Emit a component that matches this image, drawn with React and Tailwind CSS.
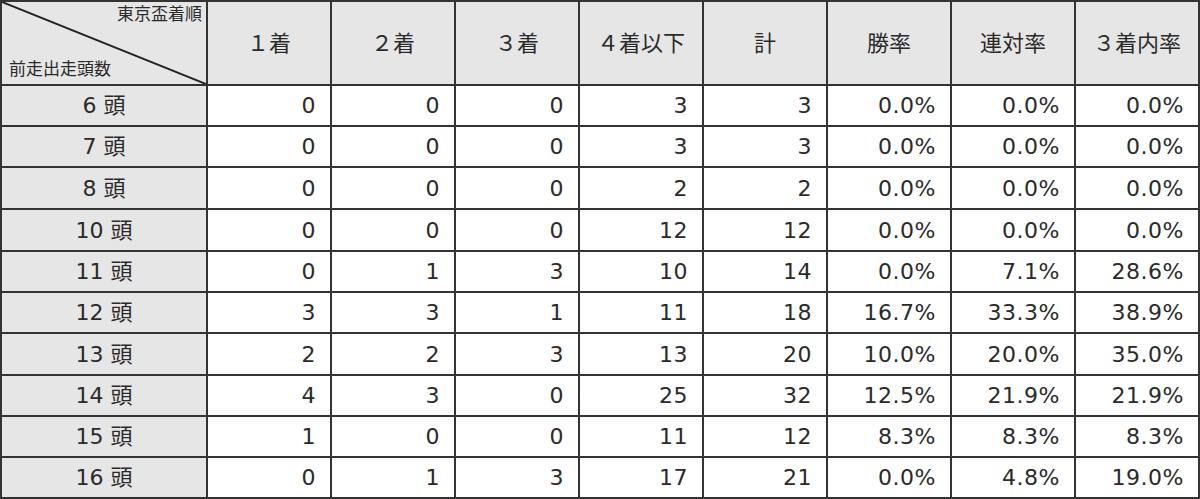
import React from "react";

const cols = ["１着", "２着", "３着", "４着以下", "計", "勝率", "連対率", "３着内率"];
const rows = [
  ["6 頭", 0, 0, 0, 3, 3, "0.0%", "0.0%", "0.0%"],
  ["7 頭", 0, 0, 0, 3, 3, "0.0%", "0.0%", "0.0%"],
  ["8 頭", 0, 0, 0, 2, 2, "0.0%", "0.0%", "0.0%"],
  ["10 頭", 0, 0, 0, 12, 12, "0.0%", "0.0%", "0.0%"],
  ["11 頭", 0, 1, 3, 10, 14, "0.0%", "7.1%", "28.6%"],
  ["12 頭", 3, 3, 1, 11, 18, "16.7%", "33.3%", "38.9%"],
  ["13 頭", 2, 2, 3, 13, 20, "10.0%", "20.0%", "35.0%"],
  ["14 頭", 4, 3, 0, 25, 32, "12.5%", "21.9%", "21.9%"],
  ["15 頭", 1, 0, 0, 11, 12, "8.3%", "8.3%", "8.3%"],
  ["16 頭", 0, 1, 3, 17, 21, "0.0%", "4.8%", "19.0%"],
];
const heights = ["h-[41px]", "h-[41px]", "h-[42px]", "h-[42px]", "h-[41px]", "h-[41px]", "h-[42px]", "h-[41px]", "h-[41px]", "h-[41px]"];
const font = { fontFamily: '"DejaVu Sans", "Noto Sans CJK JP", sans-serif' };

export default function App() {
  return (
    <div className="w-[1200px] h-[499px] bg-white text-[#2a2a2a]" style={font}>
      <div className="border-l-2 border-t-2 border-[#333] flex flex-col">
        <div className="flex h-[84px]">
          <div className="relative w-[206px] bg-[#e7e6e6] border-r-2 border-b-2 border-[#333]">
            <svg className="absolute inset-0" width="204" height="82" viewBox="0 0 204 82">
              <line x1="0" y1="0" x2="204" y2="82" stroke="#222" strokeWidth="2" />
            </svg>
            <div className="absolute right-[4px] top-[1px] text-[17px] leading-[22px]">東京盃着順</div>
            <div className="absolute left-[7px] top-[56px] text-[17px] leading-[22px]">前走出走頭数</div>
          </div>
          {cols.map((c) => (
            <div key={c} className="w-[124px] bg-[#e7e6e6] border-r-2 border-b-2 border-[#333] flex items-center justify-center text-[22px]">
              {c}
            </div>
          ))}
        </div>
        {rows.map((r, i) => (
          <div key={i} className={`flex ${heights[i]}`}>
            <div className="w-[206px] bg-[#e7e6e6] border-r-2 border-b-2 border-[#333] flex items-center justify-center text-[22px]">
              {r[0]}
            </div>
            {r.slice(1).map((v, j) => (
              <div key={j} className="w-[124px] border-r-2 border-b-2 border-[#333] flex items-center justify-end pr-[14px] text-[22px] tracking-[0.5px]">
                {v}
              </div>
            ))}
          </div>
        ))}
      </div>
    </div>
  );
}
